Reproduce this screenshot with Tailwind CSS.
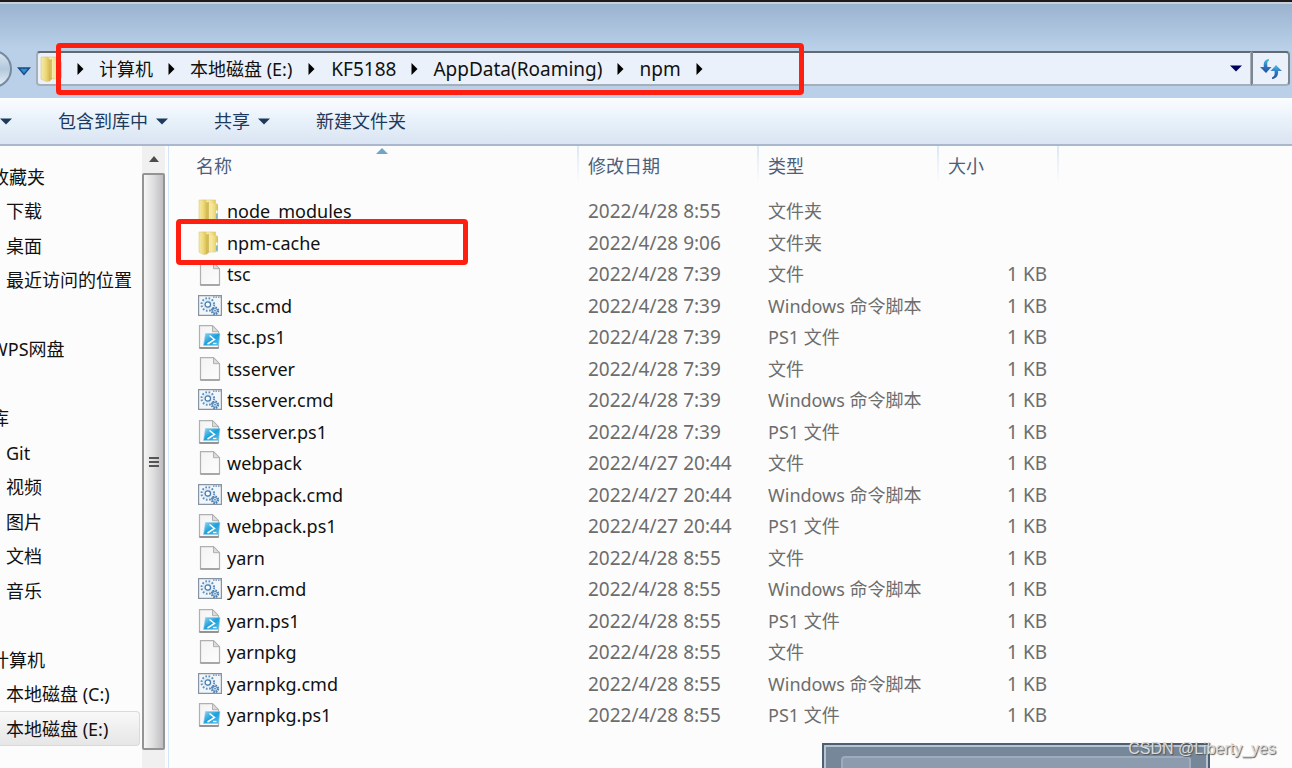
<!DOCTYPE html>
<html lang="zh-CN">
<head>
<meta charset="utf-8">
<title>npm</title>
<script src="https://cdn.jsdelivr.net/npm/@tailwindcss/browser@4"></script>
</head>
<body class="relative flex h-screen flex-col overflow-hidden bg-[#fcfcfc] font-['Noto_Sans','Noto_Sans_CJK_SC',sans-serif] text-lg leading-6 text-[#111]">

<svg class="absolute size-0" aria-hidden="true">
  <defs>
    <linearGradient id="gFold" x1="0" x2="1"><stop offset="0" stop-color="#f7eba4"/><stop offset=".55" stop-color="#ecd97c"/><stop offset="1" stop-color="#d8bb4c"/></linearGradient>
    <linearGradient id="gBack" x1="0" x2="1"><stop offset="0" stop-color="#d3b548"/><stop offset=".4" stop-color="#fbf3bd"/><stop offset="1" stop-color="#e3c95f"/></linearGradient>
    <linearGradient id="gPs" x1="0" y1="0" x2="1" y2="1"><stop offset="0" stop-color="#8fd3f0"/><stop offset=".5" stop-color="#1da0dc"/><stop offset="1" stop-color="#5cc1ea"/></linearGradient>
    <linearGradient id="gPage" x1="0" y1="0" x2="1" y2="1"><stop offset="0" stop-color="#f3f3f3"/><stop offset="1" stop-color="#fdfdfd"/></linearGradient>
    <linearGradient id="gRef" x1="0" y1="0" x2="0" y2="1"><stop offset="0" stop-color="#4fbfe4"/><stop offset=".5" stop-color="#2d78c4"/><stop offset="1" stop-color="#2a4f9c"/></linearGradient>
  </defs>
  <symbol id="folder" viewBox="0 0 24 24">
    <path d="M5 1h12.500v20H9z" fill="url(#gBack)" stroke="#dcc572" stroke-width=".6"/>
    <path d="M13 4.500h6l1 1v15l-7 .5z" fill="url(#gFold)"/>
    <path d="M1 1h5l3 2.500v19.500l-3 .6-5-2.300z" fill="url(#gFold)" stroke="#d9c36c" stroke-width=".5"/>
    <path d="M9 3.500l2-1v19L8.500 23.500z" fill="#c8a93c" opacity=".7"/>
    <path d="M18 11.500h1.500v2.500h-1.500z" fill="#fff"/><path d="M18 15.500h1.500v4h-1.500z" fill="#6cb8d8"/>
  </symbol>
  <symbol id="file" viewBox="0 0 24 24">
    <path d="M2.500.7h13l6 6v16.300h-19z" fill="url(#gPage)" stroke="#b0b0b0" stroke-width="1.200"/>
    <path d="M15.500.7v6h6z" fill="#dcdcdc" stroke="#b0b0b0"/><path d="M2.500 23h19" stroke="#8d8d8d" stroke-width="1.300"/>
  </symbol>
  <symbol id="cmd" viewBox="0 0 24 24">
    <path d="M.6 1.600h22.800v19.800H.6z" fill="#f3f6f9" stroke="#8593a3" stroke-width="1.200"/>
    <path d="M15 3.200h8" stroke="#6c86a8" stroke-width="1.300" stroke-dasharray="1.500 1"/>
    <circle cx="9.800" cy="10.500" r="6.300" fill="none" stroke="#5c90c0" stroke-width="2" stroke-dasharray="1.700 1.600"/>
    <circle cx="9.800" cy="10.500" r="4.900" fill="#d9e8f5"/><circle cx="9.800" cy="10.500" r="2.700" fill="#fafcfe" stroke="#4478ab" stroke-width="1.200"/>
    <circle cx="17" cy="16.800" r="3.200" fill="none" stroke="#4d80b2" stroke-width="2" stroke-dasharray="1.600 .9"/>
    <circle cx="17" cy="16.800" r="2.300" fill="#e0edf8" stroke="#4d80b2" stroke-width=".9"/><circle cx="17" cy="16.800" r=".8" fill="#33689f"/>
  </symbol>
  <symbol id="ps1" viewBox="0 0 24 24">
    <path d="M1.500.7h13l6 6v16.300h-19z" fill="url(#gPage)" stroke="#b0b0b0" stroke-width="1.200"/>
    <path d="M14.500.7v6h6z" fill="#dcdcdc" stroke="#b0b0b0"/><path d="M1.500 23h19" stroke="#777" stroke-width="1.400"/>
    <path d="M7.500 8.500h14.500l-1.500 12H5.500z" fill="url(#gPs)" stroke="#8ecbe6" stroke-width=".6"/>
    <path d="M11.500 10.500l5 4-7 4.500" fill="none" stroke="#fff" stroke-width="1.500"/><path d="M15 18.500h3.500" stroke="#fff" stroke-width="1.300"/>
  </symbol>
  <symbol id="right" viewBox="0 0 9 12"><path d="M1.500 0l6 6-6 6z" fill="#000"/></symbol>
  <symbol id="down" viewBox="0 0 12 7"><path d="M0 .5h12l-6 6z" fill="currentColor"/></symbol>
</svg>

<!-- Window frame and address bar -->
<header class="border-t-2 border-[#1c1a1c] bg-[#bad0e9]">
  <div class="border-t-2 border-[#c9d0d8] bg-linear-to-b from-[#9ab3cf] to-[#bad0e9] to-95% pt-[47px]"></div>
  <div class="relative flex h-[47px] items-start pr-0.5">
    <button aria-label="前进" class="-mt-px -ml-[26px] size-[38px] shrink-0 rounded-full border-2 border-[#75899f] bg-linear-to-b from-[#dbe6f0] via-[#b4c9dd] to-[#e4eff8]"></button>
    <button aria-label="最近的页面" class="ml-[5px] flex h-9 w-[19px] shrink-0 items-center pt-1"><svg class="h-[9px] w-3.5" viewBox="0 0 14 9"><path d="M1.500 1h11L7 7.500z" fill="#2c8fd0" stroke="#174b83" stroke-width="1.400"/></svg></button>
    <nav aria-label="地址" class="flex h-[35px] grow items-center rounded-l-sm border-2 border-[#a5afba] border-t-[#626970] bg-[#eaf1fa] pl-0.5">
      <svg class="size-[26px]"><use href="#folder"/></svg>
      <svg class="ml-2.5 h-3 w-[9px]"><use href="#right"/></svg>
      <ol class="ml-3.5 flex items-center">
        <li class="flex items-center"><a href="#">计算机</a><svg class="mx-3.5 h-3 w-[9px]"><use href="#right"/></svg></li>
        <li class="flex items-center"><a href="#">本地磁盘 (E:)</a><svg class="mx-[15px] h-3 w-[9px]"><use href="#right"/></svg></li>
        <li class="flex items-center text-[19px]"><a href="#">KF5188</a><svg class="mx-3.5 h-3 w-[9px]"><use href="#right"/></svg></li>
        <li class="flex items-center text-[19px]"><a href="#">AppData(Roaming)</a><svg class="mx-3.5 h-3 w-[9px]"><use href="#right"/></svg></li>
        <li class="flex items-center text-[19px]"><a href="#">npm</a><svg class="mx-3.5 h-3 w-[9px]"><use href="#right"/></svg></li>
      </ol>
      <button aria-label="以前的位置" class="mr-2 ml-auto text-[#00005f]"><svg class="h-[7px] w-3"><use href="#down"/></svg></button>
    </nav>
    <button aria-label="刷新" class="-ml-px flex h-[35px] w-[39px] shrink-0 items-center justify-center rounded-r-sm border-2 border-[#7e868e] border-t-[#626970] border-b-[#a5afba] bg-[#eaf1fa]">
      <svg class="h-5 w-[22px]" viewBox="0 0 22 20"><path d="M9 0C4 .5 3.500 4 3.800 8H0l6 6 5.500-6H7.500C7 4.500 7 2.500 9 1.500z" fill="url(#gRef)"/><path d="M12 20c5-.5 6.500-4 6-8h4l-6-6-5.500 6h4c.5 3.500 0 5.500-2.500 6.500z" fill="url(#gRef)"/></svg>
    </button>
    <div class="absolute -top-2 left-14 z-10 h-[52px] w-[748px] rounded border-[5px] border-[#ff1f10]"></div>
  </div>
</header>

<!-- Command bar -->
<div role="toolbar" class="flex h-12 shrink-0 items-center border-b-2 border-[#a9b8cd] bg-linear-to-b from-[#fbfdff] from-0% via-[#e9f2fb] via-45% to-[#dae5f3] text-[#1e395b]">
  <button aria-label="组织"><svg class="h-[7px] w-3"><use href="#down"/></svg></button>
  <button class="ml-[46px] flex items-center gap-2">包含到库中<svg class="h-[7px] w-3"><use href="#down"/></svg></button>
  <button class="ml-[46px] flex items-center gap-2">共享<svg class="h-[7px] w-3"><use href="#down"/></svg></button>
  <button class="ml-[46px]">新建文件夹</button>
</div>

<main class="flex min-h-0 grow">
  <!-- Navigation pane -->
  <nav aria-label="导航窗格" class="w-[142px] shrink-0 overflow-hidden pt-[13px]">
    <ul id="tree" class="whitespace-nowrap"></ul>
  </nav>
  <div class="flex w-[23px] shrink-0 flex-col bg-[#f0f0f0] pb-[18px]" role="scrollbar" aria-controls="tree" aria-valuenow="0">
    <svg class="mx-auto mt-2.5 mb-[11px] h-1.5 w-2.5 shrink-0" viewBox="0 0 10 6"><path d="M5 0l5 6H0z" fill="#4c4c4c"/></svg>
    <div class="flex grow flex-col items-center justify-center gap-0.5 rounded-xs border-2 border-[#949494] bg-linear-to-r from-[#f5f5f5] via-[#dedede] to-[#bebec2]">
      <i class="h-0.5 w-2.5 bg-[#555]"></i><i class="h-0.5 w-2.5 bg-[#555]"></i><i class="h-0.5 w-2.5 bg-[#555]"></i>
    </div>
  </div>

  <!-- File list -->
  <section class="ml-[3px] grow border-l border-[#d5e5f8]">
    <table class="w-[890px] table-fixed border-collapse text-left">
      <colgroup><col class="w-[410px]"><col class="w-[180px]"><col class="w-[180px]"><col class="w-[120px]"></colgroup>
      <thead class="text-[#4c607a]">
        <tr class="h-[49px] align-top">
          <th scope="col" class="relative bg-linear-to-b from-[#dce8f5] to-[#fcfcfc] bg-[length:2px_36px] bg-right-top bg-no-repeat pt-2 pl-[27px] font-normal">名称<svg class="absolute top-0.5 left-[207px] h-1.5 w-3" viewBox="0 0 12 6"><path d="M6 0l6 6H0z" fill="#6fa5c6"/></svg></th>
          <th scope="col" class="bg-linear-to-b from-[#dce8f5] to-[#fcfcfc] bg-[length:2px_36px] bg-right-top bg-no-repeat pt-2 pl-[9px] font-normal">修改日期</th>
          <th scope="col" class="bg-linear-to-b from-[#dce8f5] to-[#fcfcfc] bg-[length:2px_36px] bg-right-top bg-no-repeat pt-2 pl-[9px] font-normal">类型</th>
          <th scope="col" class="bg-linear-to-b from-[#dce8f5] to-[#fcfcfc] bg-[length:2px_36px] bg-right-top bg-no-repeat pt-2 pl-[9px] font-normal">大小</th>
        </tr>
      </thead>
      <tbody id="files"></tbody>
    </table>
  </section>
</main>

<!-- Taskbar preview peeking over the window -->
<div class="absolute right-[82px] bottom-0 h-[25px] w-[388px] border-2 border-b-0 border-[#4d5f70] bg-[#758799]">
  <div class="h-full border-2 border-b-0 border-[#b5c4d3] px-[15px] pt-[9px]"><div class="h-full rounded-t border-2 border-b-0 border-[#9eacbc] bg-[#8c9bae]"></div></div>
</div>
<p class="absolute right-4 bottom-[7px] font-['Liberation_Sans',sans-serif] text-base text-[#dcdcdc] [text-shadow:1px_1px_1px_#555]">CSDN @Liberty_yes</p>

<script>
const tree = [['收藏夹',0],['下载',1],['桌面',1],['最近访问的位置',1],null,['WPS网盘',0],null,['库',0],['Git',1],['视频',1],['图片',1],['文档',1],['音乐',1],null,['计算机',0],['本地磁盘 (C:)',1],['本地磁盘 (E:)',2]];
const level = [
  '-ml-[9px] flex h-full items-center',
  'flex h-full items-center pl-1.5',
  'mr-0.5 flex h-full items-center rounded-r border border-l-0 border-[#dadada] bg-linear-to-b from-[#f8f8f8] to-[#e6e6e6] pl-1.5'
];
document.getElementById('tree').innerHTML = tree.map(t =>
  `<li class="odd:h-[35px] even:h-[34px]">${t ? `<a href="#" class="${level[t[1]]}">${t[0]}</a>` : ''}</li>`).join('');

const kinds = { folder: '文件夹', file: '文件', cmd: 'Windows 命令脚本', ps1: 'PS1 文件' };
const files = [['node_modules','folder','2022/4/28 8:55'],['npm-cache','folder','2022/4/28 9:06']];
[['tsc','2022/4/28 7:39'],['tsserver','2022/4/28 7:39'],['webpack','2022/4/27 20:44'],['yarn','2022/4/28 8:55'],['yarnpkg','2022/4/28 8:55']].forEach(([n, d]) =>
  files.push([n,'file',d],[n + '.cmd','cmd',d],[n + '.ps1','ps1',d]));
const mark = '<div class="absolute -top-2 left-[7px] z-10 h-[46px] w-[292px] rounded border-[5px] border-[#ff1f10]"></div>';
document.getElementById('files').innerHTML = files.map(([n, k, d]) =>
  `<tr class="odd:h-8 even:h-[31px] text-[#6d6d6d]">
    <td class="relative p-0 pl-[29px] text-[#111]"><a href="#" class="flex items-center gap-[5px]"><svg class="size-6"><use href="#${k}"/></svg>${n}</a>${n === 'npm-cache' ? mark : ''}</td>
    <td class="p-0 pl-[9px] text-[19px]">${d}</td><td class="p-0 pl-[9px] whitespace-nowrap">${kinds[k]}</td>
    <td class="p-0 pr-3 text-right text-[19px]">${k === 'folder' ? '' : '1 KB'}</td></tr>`).join('');
</script>
</body>
</html>
